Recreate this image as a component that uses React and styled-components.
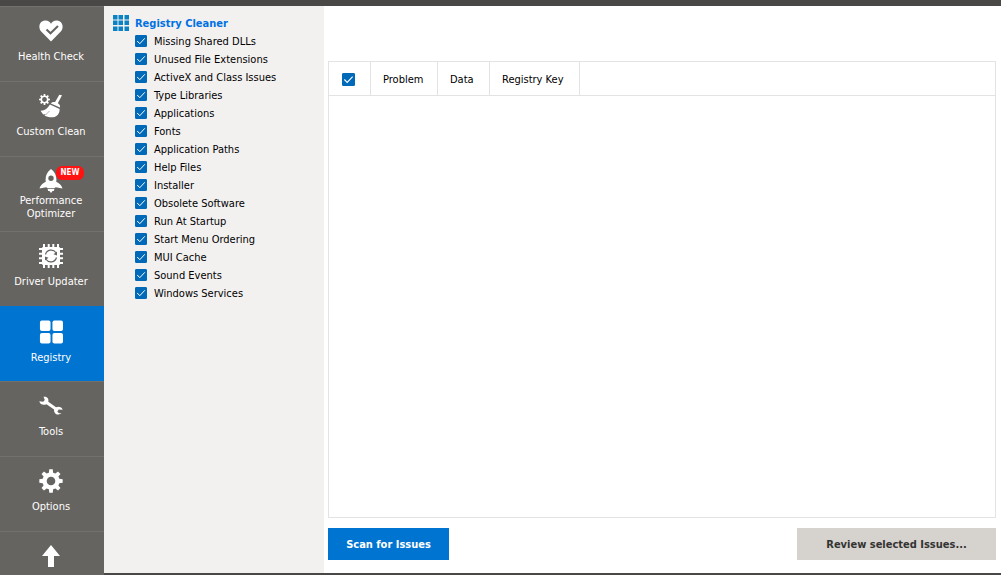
import React, { useState } from "react";
import styled, { createGlobalStyle } from "styled-components";

const GlobalStyle = createGlobalStyle`
  * { box-sizing: border-box; }
  body {
    margin: 0;
    background: #ffffff;
    color: #000000;
    font-family: Tahoma, "DejaVu Sans Condensed", "Noto Sans", sans-serif;
    font-size: 11px;
    line-height: 13px;
  }
  button, input { font: inherit; }
`;

const Page = styled.div`
  display: flex;
  flex-direction: column;
  height: 100vh;
`;

const TitleStrip = styled.div`
  flex: none;
  height: 6px;
  background: #4a4846;
`;

const Body = styled.div`
  display: flex;
  flex: 1;
  min-height: 0;
`;

const Sidebar = styled.nav`
  flex: none;
  width: 104px;
  overflow: hidden;
  background: #666460;
`;

const NavButton = styled.button`
  position: relative;
  display: flex;
  flex-direction: column;
  align-items: center;
  gap: ${(p) => (p.$tall ? 1 : 7)}px;
  width: 100%;
  height: 75px;
  padding: ${(p) => (p.$active ? 13 : 12)}px 2px 0 0;
  border: 0;
  border-top: 1px solid ${(p) => (p.$active ? "#0074d1" : "#73716d")};
  background: ${(p) => (p.$active ? "#0074d1" : "transparent")};
  color: #ffffff;
  line-height: 13px;
`;

const NavIcon = styled.svg`
  flex: none;
  display: block;
  width: 24px;
  height: 24px;
  fill: #ffffff;
`;

const NavLabel = styled.span`
  width: 86px;
  text-align: center;
`;

const Badge = styled.span`
  position: absolute;
  top: 9px;
  right: 20px;
  width: 28px;
  height: 14px;
  border-radius: 6px;
  background: #ff1212;
  font-size: 8px;
  font-weight: bold;
  line-height: 14px;
  text-align: center;
`;

const Content = styled.div`
  display: flex;
  flex: 1;
  min-width: 0;
  border-bottom: 2px solid #4a4846;
`;

const Categories = styled.aside`
  flex: none;
  width: 220px;
  padding: 8px 9px;
  background: #f3f1f0;
`;

const Heading = styled.h1`
  display: flex;
  align-items: center;
  gap: 6px;
  height: 18px;
  margin: 0;
  color: #0071e3;
  font-size: 11px;
`;

const GridIcon = styled.svg`
  width: 16px;
  height: 16px;
  fill: #0a82c4;
`;

const CategoryList = styled.ul`
  margin: 0;
  padding: 0 0 0 22px;
  list-style: none;
`;

const Category = styled.label`
  display: flex;
  align-items: center;
  gap: 7px;
  height: 18px;
`;

const CheckFrame = styled.span`
  display: grid;
  flex: none;
  width: ${(p) => p.$size}px;
  height: ${(p) => p.$size}px;
`;

const CheckInput = styled.input`
  grid-area: 1 / 1;
  width: 100%;
  height: 100%;
  margin: 0;
  appearance: none;
  border: 1px solid #0069b8;
  border-radius: 1px;
  background: #ffffff;
  &:checked { background: #0069b8; }
`;

const CheckMark = styled.svg`
  grid-area: 1 / 1;
  width: 100%;
  height: 100%;
  fill: none;
  stroke: #ffffff;
  pointer-events: none;
`;

const Main = styled.main`
  display: flex;
  flex: 1;
  flex-direction: column;
  min-width: 0;
  padding: 55px 5px 13px 4px;
`;

const Results = styled.div`
  flex: 1;
  min-height: 0;
  border: 1px solid #e3e3e3;
`;

const Table = styled.table`
  width: 100%;
  border-collapse: separate;
  border-spacing: 0;
  table-layout: fixed;
`;

const Head = styled.th`
  width: ${(p) => (p.$width ? `${p.$width}px` : "auto")};
  height: 34px;
  padding: 2px 0 0 ${(p) => (p.$check ? 13 : 12)}px;
  border-right: ${(p) => (p.$width ? "1px solid #e3e3e3" : "0")};
  border-bottom: 1px solid #e3e3e3;
  font-weight: normal;
  text-align: left;
  white-space: nowrap;
`;

const Actions = styled.footer`
  display: flex;
  justify-content: space-between;
  margin-top: 10px;
`;

const ActionButton = styled.button`
  width: ${(p) => (p.$primary ? 121 : 199)}px;
  height: 32px;
  padding: 0;
  border: 0;
  background: ${(p) => (p.$primary ? "#0074d1" : "#d6d2cd")};
  color: ${(p) => (p.$primary ? "#ffffff" : "#333333")};
  font-weight: bold;
`;

const gearPath = (cx, cy, teeth, outer, inner, hole) => {
  const step = (Math.PI * 2) / teeth;
  const pt = (r, a) => `${(cx + r * Math.sin(a)).toFixed(2)} ${(cy - r * Math.cos(a)).toFixed(2)}`;
  const points = [];
  for (let i = 0; i < teeth; i += 1) {
    const a = i * step;
    points.push(pt(inner, a - step * 0.32), pt(outer, a - step * 0.19), pt(outer, a + step * 0.19), pt(inner, a + step * 0.32));
  }
  return `M${points.join("L")}Z M${cx - hole} ${cy}a${hole} ${hole} 0 1 0 ${hole * 2} 0a${hole} ${hole} 0 1 0 ${-hole * 2} 0Z`;
};

const icons = {
  health: (
    <>
      <path d="M12 22.5 2.2 12.4C-1.2 8.6.2 2 6 1.5c3-.2 5 1.3 6 3.2 1-1.9 3-3.4 6-3.2 5.800.5 7.200 7.100 3.800 10.900Z" />
      <path d="M7.5 10.5l4 3.800 7.500-7.300" fill="none" stroke="#666460" strokeWidth="2" />
    </>
  ),
  clean: (
    <>
      <path d={gearPath(5.5, 5.5, 8, 5.5, 4, 2.4)} fillRule="evenodd" />
      <path d="M20.300.8 23 1.200 18.800 9.300c1.700 1 2.600 2.500 2.200 4.200L11.800 9.400c1.300-1.300 2.800-1.600 4.300-1.300Z" />
      <path d="M10.900 10.600l9.700 4.300c.2 4.200-2.200 7.600-6.400 8.300-3.200.5-6.500-.4-8.700-2l1.200-1.200-2.500.5-2.700-3.700c4.200.2 7.200-2.200 9.400-6.200Z" />
      <path d="M6.500 21l4-4" fill="none" stroke="#666460" strokeWidth="0.500" />
    </>
  ),
  rocket: (
    <>
      <path fillRule="evenodd" d="M12 0c3.800 2.600 5.400 6.300 5.400 10.500 0 .8 0 1.500-.2 2.200 3.200 1.400 5.400 3.600 6.300 6.800l-6.700-1.200-1.300.7h-7l-1.300-.7-6.700 1.200c.9-3.200 3.100-5.400 6.300-6.800-.2-.7-.2-1.400-.2-2.200C6.600 6.300 8.200 2.600 12 0Zm0 6.500a2.700 2.700 0 1 0 0 5.400 2.700 2.700 0 0 0 0-5.400Z" />
      <path d="M8.500 19.700h7l-.7 2.300h-1.300L12 24l-1.500-2H9.200Z" />
    </>
  ),
  driver: (
    <>
      <rect x="3" y="3" width="18" height="18" rx="1" />
      <path d="M5 0v24M9.700 0v24M14.300 0v24M19 0v24M0 5h24M0 9.700h24M0 14.300h24M0 19h24" fill="none" stroke="#ffffff" strokeWidth="2" />
      <path d="M6.500 10.500a5.800 5.800 0 0 1 10.500-1.700M17.500 13.500a5.800 5.800 0 0 1-10.500 1.700" fill="none" stroke="#666460" strokeWidth="1.200" />
      <path d="M18 7.500v4l-3.500-1.200ZM6 16.500v-4l3.500 1.200Z" fill="#666460" />
    </>
  ),
  registry: (
    <>
      <rect x="1" y="0" width="11" height="11" rx="2" />
      <rect x="14" y="0" width="11" height="11" rx="2" />
      <rect x="1" y="13" width="11" height="11" rx="2" />
      <rect x="14" y="13" width="11" height="11" rx="2" />
    </>
  ),
  tools: (
    <path d="M4.500 2.800C8.300 2 10 4.800 9.300 7.800l7.700 5.400c3-1.300 5.900-.1 6.700 2.500l-4-.2-1.400 2.300 1.900 1.500 2.200-.2c-3.500 3.300-7.900.6-7.300-3.600L7.500 10.200C4.200 11.500 1 10.400.3 7.200l3.900.6L5.800 6Z" />
  ),
  options: <path d={gearPath(12, 12, 8, 11.8, 8.6, 4.3)} fillRule="evenodd" />,
  up: <path d="M12 1l9 11h-6v11H9V12H3Z" />,
};

const navItems = [
  { icon: "health", label: "Health Check" },
  { icon: "clean", label: "Custom Clean" },
  { icon: "rocket", label: "Performance Optimizer", badge: "NEW" },
  { icon: "driver", label: "Driver Updater" },
  { icon: "registry", label: "Registry" },
  { icon: "tools", label: "Tools" },
  { icon: "options", label: "Options" },
  { icon: "up" },
];

const categories = [
  "Missing Shared DLLs",
  "Unused File Extensions",
  "ActiveX and Class Issues",
  "Type Libraries",
  "Applications",
  "Fonts",
  "Application Paths",
  "Help Files",
  "Installer",
  "Obsolete Software",
  "Run At Startup",
  "Start Menu Ordering",
  "MUI Cache",
  "Sound Events",
  "Windows Services",
];

function Checkbox({ size = 12, ...rest }) {
  const [checked, setChecked] = useState(true);
  return (
    <CheckFrame $size={size}>
      <CheckInput type="checkbox" checked={checked} onChange={(e) => setChecked(e.target.checked)} {...rest} />
      {checked && (
        <CheckMark viewBox="0 0 12 12" aria-hidden="true">
          <path d="M2.200 6 4.800 8.700l5-5.400" />
        </CheckMark>
      )}
    </CheckFrame>
  );
}

export default function App() {
  const [active, setActive] = useState("registry");
  return (
    <Page>
      <GlobalStyle />
      <TitleStrip />
      <Body>
        <Sidebar>
          {navItems.map(({ icon, label, badge }) => (
            <NavButton
              key={icon}
              type="button"
              $active={icon === active}
              $tall={Boolean(badge)}
              aria-label={label ? undefined : "Upgrade"}
              onClick={() => setActive(icon)}
            >
              <NavIcon viewBox={icon === "registry" ? "0 0 25 24" : "0 0 24 24"} aria-hidden="true">
                {icons[icon]}
              </NavIcon>
              {label && <NavLabel>{label}</NavLabel>}
              {badge && <Badge>{badge}</Badge>}
            </NavButton>
          ))}
        </Sidebar>
        <Content>
          <Categories>
            <Heading>
              <GridIcon viewBox="0 0 16 16" aria-hidden="true">
                {[0, 6, 12].map((y) =>
                  [0, 6, 12].map((x) => (
                    <rect key={`${x}-${y}`} x={x === 0 ? 0 : x - 0.5} y={y === 0 ? 0 : y - 0.5} width="4.500" height="4.500" />
                  ))
                )}
              </GridIcon>
              Registry Cleaner
            </Heading>
            <CategoryList>
              {categories.map((name) => (
                <li key={name}>
                  <Category>
                    <Checkbox />
                    {name}
                  </Category>
                </li>
              ))}
            </CategoryList>
          </Categories>
          <Main>
            <Results>
              <Table>
                <thead>
                  <tr>
                    <Head $width={42} $check>
                      <Checkbox size={13} aria-label="Select all issues" />
                    </Head>
                    <Head $width={67}>Problem</Head>
                    <Head $width={52}>Data</Head>
                    <Head $width={90}>Registry Key</Head>
                    <Head as="td" />
                  </tr>
                </thead>
              </Table>
            </Results>
            <Actions>
              <ActionButton type="button" $primary>Scan for Issues</ActionButton>
              <ActionButton type="button">Review selected Issues...</ActionButton>
            </Actions>
          </Main>
        </Content>
      </Body>
    </Page>
  );
}
